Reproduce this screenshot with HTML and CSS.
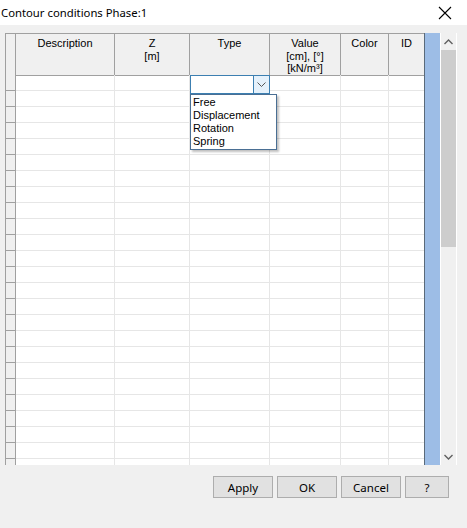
FILE: index.html
```html
<!DOCTYPE html>
<html>
<head>
<meta charset="utf-8">
<link rel="stylesheet" href="styles.css">
</head>
<body>
<div class="window">
  <div class="titlebar">
    <span class="title">Contour conditions Phase:1</span>
    <svg class="close" width="14" height="14" viewBox="0 0 14 14"><path d="M1 1 L13 13 M13 1 L1 13" stroke="#000" stroke-width="1.1" fill="none"/></svg>
  </div>
  <div class="content">
    <div class="gridbox">
      <div class="table">
        <div class="row head">
          <div class="c rh"></div>
          <div class="c">Description</div>
          <div class="c">Z<br>[m]</div>
          <div class="c">Type</div>
          <div class="c">Value<br>[cm], [°]<br>[kN/m³]</div>
          <div class="c">Color</div>
          <div class="c">ID</div>
        </div>
        <div id="rows"></div>
        <div class="combo">
          <div class="combo-field"></div>
          <div class="combo-btn"><svg width="9" height="6" viewBox="0 0 9 6"><path d="M0.5 0.5 L4.5 4.5 L8.5 0.5" stroke="#555" stroke-width="1" fill="none"/></svg></div>
        </div>
        <div class="list">
          <div>Free</div>
          <div>Displacement</div>
          <div>Rotation</div>
          <div>Spring</div>
        </div>
      </div>
      <div class="strip"></div>
      <div class="sgap"></div>
      <div class="scroll">
        <div class="arrow"><svg width="9" height="6" viewBox="0 0 9 6"><path d="M0.5 5 L4.5 1 L8.5 5" stroke="#606060" stroke-width="1.4" fill="none"/></svg></div>
        <div class="thumb"></div>
        <div class="track"></div>
        <div class="arrow"><svg width="9" height="6" viewBox="0 0 9 6"><path d="M0.5 1 L4.5 5 L8.5 1" stroke="#606060" stroke-width="1.4" fill="none"/></svg></div>
      </div>
      <div class="edge"></div>
    </div>
    <div class="buttons">
      <button class="btn">Apply</button>
      <button class="btn">OK</button>
      <button class="btn">Cancel</button>
      <button class="btn small">?</button>
    </div>
  </div>
</div>
<script>
  var r = document.getElementById('rows');
  var html = '';
  for (var i = 0; i < 25; i++) {
    html += '<div class="row body"><div class="c rh"></div><div class="c"></div><div class="c"></div><div class="c"></div><div class="c"></div><div class="c"></div><div class="c"></div></div>';
  }
  r.innerHTML = html;
</script>
</body>
</html>
```
FILE: styles.css
```css
html, body {
  margin: 0;
  padding: 0;
}
body {
  background: #f0f0f0;
  width: 467px;
  height: 528px;
  overflow: hidden;
  font-family: "Noto Sans", "Open Sans", sans-serif;
}
.window {
  width: 467px;
  height: 528px;
  display: flex;
  flex-direction: column;
}
.titlebar {
  height: 25px;
  background: #ffffff;
  display: flex;
  align-items: center;
  justify-content: space-between;
  padding-left: 1px;
  padding-right: 15px;
}
.title {
  font-size: 11.3px;
  color: #000;
}
.close {
  display: block;
  margin-top: 1px;
}
.content {
  padding: 8px 10px 0 5px;
  display: flex;
  flex-direction: column;
}
.gridbox {
  height: 432px;
  display: flex;
  background: #ffffff;
}
.table {
  position: relative;
  width: 419px;
  height: 432px;
  overflow: hidden;
  font-family: "Liberation Sans", Arial, sans-serif;
  font-size: 11px;
}
.row {
  display: grid;
  grid-template-columns: 11px 99px 75px 80px 71px 48px 35px;
}
.row .c {
  box-sizing: border-box;
  border-right: 1px solid #e6e6e6;
  border-bottom: 1px solid #e6e6e6;
}
.row.head {
  height: 42px;
}
.row.head .c {
  background: #f0f0f0;
  border-right: 1px solid #a0a0a0;
  border-bottom: 1px solid #a0a0a0;
  border-top: 1px solid #a0a0a0;
  text-align: center;
  line-height: 12.5px;
  padding-top: 3px;
  color: #000;
}
.row.head .c:last-child {
  border-right: none;
}
.row.body .c:last-child {
  border-right: none;
}
.row.body {
  height: 16px;
}
.row .c.rh {
  background: #f0f0f0;
  border-left: 1px solid #a0a0a0;
  border-right: 1px solid #a0a0a0;
  border-bottom: 1px solid #a0a0a0;
}
.combo {
  position: absolute;
  left: 185px;
  top: 42px;
  width: 80px;
  height: 19px;
  box-sizing: border-box;
  border: 1px solid #3c7fb1;
  background: #fff;
  display: flex;
}
.combo-field {
  flex: 1;
}
.combo-btn {
  width: 16px;
  box-sizing: border-box;
  border-left: 1px solid #3c7fb1;
  background: #e5f1fb;
  display: flex;
  align-items: center;
  justify-content: center;
}
.combo-btn svg {
  display: block;
}
.list {
  position: absolute;
  left: 185px;
  top: 61px;
  width: 87px;
  box-sizing: border-box;
  border: 1px solid #4a6f94;
  background: #fff;
  padding: 1px 0 1px 2px;
  line-height: 13px;
  color: #000;
  box-shadow: 2px 2px 2px rgba(0, 0, 0, 0.25);
}
.strip {
  width: 16px;
  box-sizing: border-box;
  border-left: 1px solid #5a6a7a;
  background: #9dbde6;
}
.sgap {
  width: 1px;
  background: #ffffff;
}
.scroll {
  width: 15px;
  background: #f0f0f0;
  display: flex;
  flex-direction: column;
}
.arrow {
  height: 17px;
  display: flex;
  align-items: center;
  justify-content: center;
}
.arrow svg {
  display: block;
}
.thumb {
  height: 197px;
  background: #cdcdcd;
}
.track {
  flex: 1;
}
.edge {
  width: 1px;
  background: #ffffff;
}
.buttons {
  display: flex;
  justify-content: flex-end;
  gap: 4px;
  margin-top: 11px;
  padding-right: 8px;
}
.btn {
  width: 60px;
  height: 22px;
  box-sizing: border-box;
  border: 1px solid #adadad;
  background: #e1e1e1;
  font-family: "Noto Sans", "Open Sans", sans-serif;
  font-size: 11.5px;
  color: #000;
  padding: 0;
  margin: 0;
}
.btn.small {
  width: 44px;
}
```
